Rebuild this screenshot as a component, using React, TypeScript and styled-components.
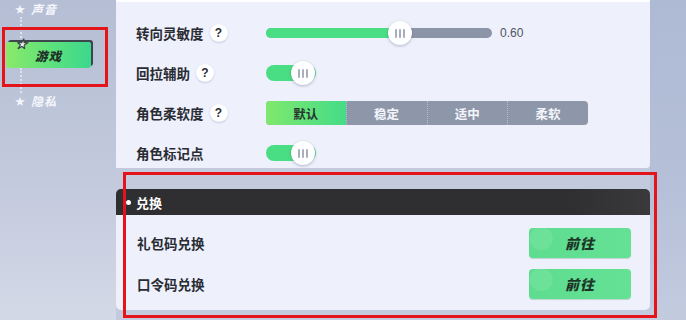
import React from "react";
import styled, { createGlobalStyle } from "styled-components";

const GlobalStyle = createGlobalStyle`
  html, body { margin: 0; padding: 0; overflow: hidden; }
  body { font-family: "Noto Sans CJK SC", "Noto Sans", sans-serif; }
`;

const Screen = styled.div`
  position: relative;
  width: 686px;
  height: 320px;
  display: flex;
  background: #c3cadd;
  overflow: hidden;
`;

const Sidebar = styled.div`
  width: 116px;
  flex-shrink: 0;
  display: flex;
  flex-direction: column;
  padding: 1px 0 0 6px;
  box-sizing: border-box;
  background: linear-gradient(180deg, #b5bed4 0%, #c2c9dc 55%, #d4d9e7 100%);
`;

const NavItem = styled.div`
  display: flex;
  align-items: center;
  gap: 5px;
  height: 16px;
  padding-left: 9px;
  color: #f4f6fb;
  font-size: 12px;
  line-height: 16px;
  font-weight: 700;
  font-style: italic;
  letter-spacing: 1px;
  span:first-child {
    font-size: 10px;
    font-style: normal;
  }
`;

const Dots = styled.div<{ $h: number }>`
  height: ${(p) => p.$h}px;
  margin-left: 14px;
  border-left: 2px dotted rgba(255, 255, 255, 0.55);
`;

const ActiveTab = styled.div`
  position: relative;
  width: 85px;
  height: 26px;
  display: flex;
  align-items: center;
  justify-content: center;
  border-radius: 3px;
  background: linear-gradient(90deg, #8ae96a 0%, #5fe27b 50%, #3cd88d 100%);
  box-shadow: 2px -2px 0 #3d454d;
  color: #1f3328;
  font-size: 12.5px;
  font-weight: 800;
  font-style: italic;
  letter-spacing: 1px;
`;

const TabStar = styled.span`
  position: absolute;
  left: 10px;
  top: -7px;
  font-size: 11px;
  color: #eef3f6;
  -webkit-text-stroke: 1px #2f363d;
`;

const Main = styled.div`
  width: 534px;
  flex-shrink: 0;
  display: flex;
  flex-direction: column;
`;

const SettingsPanel = styled.div`
  height: 168px;
  box-sizing: border-box;
  padding: 11px 0 0 20px;
  background: #eef0fc;
  border-top: 2px solid #ffffff;
  border-bottom-right-radius: 4px;
  overflow: hidden;
`;

const Row = styled.div`
  height: 40px;
  display: grid;
  grid-template-columns: 130px 1fr;
  align-items: center;
`;

const Label = styled.div`
  display: flex;
  align-items: center;
  gap: 6px;
  color: #2a2c33;
  font-size: 13.5px;
  font-weight: 700;
`;

const Help = styled.span`
  width: 18px;
  height: 18px;
  border-radius: 50%;
  background: #ffffff;
  box-shadow: 0 1px 2px rgba(80, 90, 120, 0.25);
  display: flex;
  align-items: center;
  justify-content: center;
  font-family: "Liberation Sans", Arial, sans-serif;
  font-size: 12px;
  font-weight: 700;
  color: #2a2c33;
`;

const SliderWrap = styled.div`
  display: flex;
  align-items: center;
  gap: 8px;
`;

const Track = styled.div`
  position: relative;
  width: 226px;
  height: 10px;
  border-radius: 5px;
  background: #8c95a8;
`;

const Fill = styled.div`
  height: 100%;
  border-radius: 5px;
  background: #49de83;
`;

const Thumb = styled.div<{ $x: number }>`
  position: absolute;
  top: 50%;
  left: ${(p) => p.$x}px;
  width: 24px;
  height: 24px;
  margin: -12px 0 0 -12px;
  border-radius: 50%;
  background: #ffffff;
  box-shadow: 0 1px 3px rgba(60, 70, 100, 0.35);
  display: flex;
  align-items: center;
  justify-content: center;
  gap: 2px;
  i {
    width: 2px;
    height: 9px;
    background: #a9afbd;
    border-radius: 1px;
  }
`;

const Value = styled.span`
  font-family: "Liberation Sans", Arial, sans-serif;
  font-size: 12px;
  color: #50535c;
`;

const Toggle = styled.div`
  position: relative;
  width: 50px;
  height: 16px;
  border-radius: 8px;
  background: #49de83;
`;

const Segments = styled.div`
  width: 322px;
  height: 24px;
  display: flex;
  border-radius: 4px;
  overflow: hidden;
  background: #8e97aa;
`;

const Segment = styled.div<{ $active?: boolean }>`
  flex: 1;
  display: flex;
  align-items: center;
  justify-content: center;
  font-size: 12.5px;
  font-weight: 700;
  color: ${(p) => (p.$active ? "#27362d" : "#f3f5fa")};
  background: ${(p) =>
    p.$active ? "linear-gradient(90deg, #7fe86d, #45dc88)" : "transparent"};
  & + & {
    border-left: 1px dotted rgba(255, 255, 255, 0.35);
  }
`;

const Header = styled.div`
  margin-top: 21px;
  height: 26px;
  display: flex;
  align-items: center;
  gap: 5px;
  padding-left: 10px;
  border-radius: 5px 5px 0 0;
  background: linear-gradient(90deg, #2f2f31 0%, #2f2f31 85%, #3a3a3d 100%);
  color: #ffffff;
  font-size: 13px;
  font-weight: 700;
  &::before {
    content: "";
    width: 5px;
    height: 5px;
    border-radius: 50%;
    background: #ffffff;
  }
`;

const ExchangePanel = styled.div`
  height: 95px;
  box-sizing: border-box;
  padding: 7px 19px 0 21px;
  background: #eef1fc;
  border-radius: 0 0 5px 5px;
`;

const ExchangeRow = styled.div`
  height: 41px;
  display: flex;
  align-items: center;
  justify-content: space-between;
  color: #2a2c33;
  font-size: 13.5px;
  font-weight: 700;
`;

const GoButton = styled.div`
  width: 102px;
  height: 30px;
  border-radius: 4px;
  display: flex;
  align-items: center;
  justify-content: center;
  background: radial-gradient(circle at 12% 35%, rgba(140, 235, 175, 0.3) 0 12%, transparent 13%),
    linear-gradient(90deg, #5edc8f, #64e195);
  box-shadow: 0 1px 1px rgba(40, 120, 70, 0.25);
  color: #1d3527;
  font-size: 14px;
  font-weight: 800;
  font-style: italic;
  letter-spacing: 1px;
`;

const RightStrip = styled.div`
  flex: 1;
  background: linear-gradient(180deg, #aeb9d4 0%, #b6c0d8 60%, #c3cbdf 100%);
`;

const Mark = styled.div<{ $x: number; $y: number; $w: number; $h: number }>`
  position: absolute;
  left: ${(p) => p.$x}px;
  top: ${(p) => p.$y}px;
  width: ${(p) => p.$w}px;
  height: ${(p) => p.$h}px;
  box-sizing: border-box;
  border: 3px solid #e5141b;
  pointer-events: none;
`;

const Bars = () => (
  <>
    <i />
    <i />
    <i />
  </>
);

export default function App() {
  return (
    <Screen>
      <GlobalStyle />
      <Sidebar>
        <NavItem>
          <span>★</span>
          <span>声音</span>
        </NavItem>
        <Dots $h={25} />
        <ActiveTab>
          <TabStar>★</TabStar>
          游戏
        </ActiveTab>
        <Dots $h={25} />
        <NavItem>
          <span>★</span>
          <span>隐私</span>
        </NavItem>
      </Sidebar>

      <Main>
        <SettingsPanel>
          <Row>
            <Label>
              转向灵敏度<Help>?</Help>
            </Label>
            <SliderWrap>
              <Track>
                <Fill style={{ width: "60%" }} />
                <Thumb $x={134}>
                  <Bars />
                </Thumb>
              </Track>
              <Value>0.60</Value>
            </SliderWrap>
          </Row>
          <Row>
            <Label>
              回拉辅助<Help>?</Help>
            </Label>
            <Toggle>
              <Thumb $x={37}>
                <Bars />
              </Thumb>
            </Toggle>
          </Row>
          <Row>
            <Label>
              角色柔软度<Help>?</Help>
            </Label>
            <Segments>
              <Segment $active>默认</Segment>
              <Segment>稳定</Segment>
              <Segment>适中</Segment>
              <Segment>柔软</Segment>
            </Segments>
          </Row>
          <Row>
            <Label>角色标记点</Label>
            <Toggle>
              <Thumb $x={37}>
                <Bars />
              </Thumb>
            </Toggle>
          </Row>
        </SettingsPanel>

        <Header>兑换</Header>
        <ExchangePanel>
          <ExchangeRow>
            礼包码兑换
            <GoButton>前往</GoButton>
          </ExchangeRow>
          <ExchangeRow>
            口令码兑换
            <GoButton>前往</GoButton>
          </ExchangeRow>
        </ExchangePanel>
      </Main>

      <RightStrip />

      <Mark $x={2} $y={27} $w={106} $h={60} />
      <Mark $x={123} $y={172} $w={534} $h={146} />
    </Screen>
  );
}
